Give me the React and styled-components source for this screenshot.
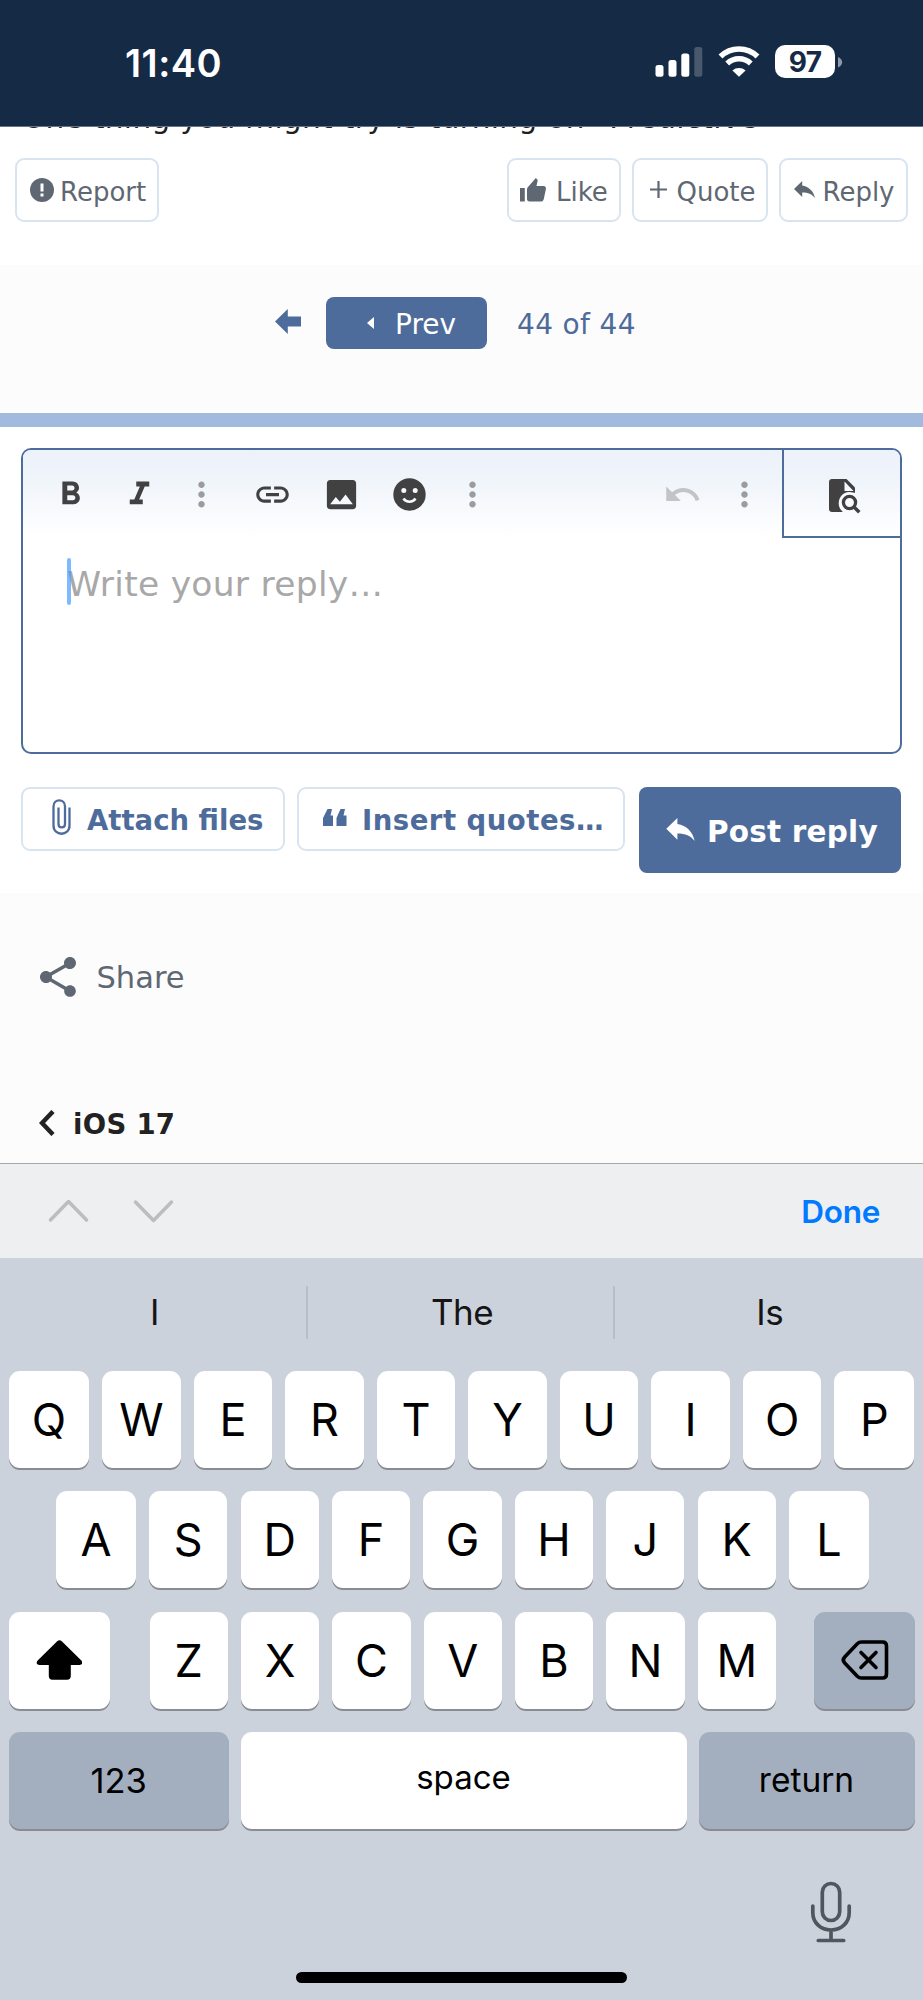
import React from "react";
import styled, { createGlobalStyle } from "styled-components";
import {
  MdFormatBold,
  MdFormatItalic,
  MdMoreVert,
  MdLink,
  MdImage,
  MdUndo,
  MdShare
} from "react-icons/md";

const NAVY = "#152a45";
const BLUE = "#4d6c9b";
const GREY = "#5f6872";

const TOP_ROW = "QWERTYUIOP".split("");
const HOME_ROW = "ASDFGHJKL".split("");
const BOTTOM_ROW = "ZXCVBNM".split("");
const SUGGESTIONS = ["I", "The", "Is"];

const GlobalStyle = createGlobalStyle`
  body {
    margin: 0;
    background: #fff;
  }

  * {
    box-sizing: border-box;
  }

  svg {
    display: block;
    flex: none;
  }
`;

const Screen = styled.div`
  display: flex;
  flex-direction: column;
  width: 923px;
  height: 2000px;
  overflow: hidden;
  font-family: Verdana, "DejaVu Sans", sans-serif;
`;

const StatusBar = styled.header`
  display: flex;
  flex: none;
  height: 127px;
  padding: 45px 80px 0 125px;
  background: ${NAVY};
  border-bottom: 1px solid #66738a;
  font-family: Inter, sans-serif;
`;

const Time = styled.div`
  flex: 1;
  color: #fff;
  font-size: 38px;
  font-weight: 600;
  line-height: 36px;
  letter-spacing: 0.5px;
`;

const StatusIcons = styled.div`
  display: flex;
  height: 34px;
`;

const Signal = styled.svg`
  margin-right: 15px;
`;

const Wifi = styled.svg`
  margin-right: 15px;
`;

const Battery = styled.div`
  width: 60px;
  height: 33px;
  border-radius: 10px;
  background: #fff;
  color: ${NAVY};
  font-size: 28px;
  font-weight: 700;
  line-height: 34px;
  letter-spacing: -0.8px;
  text-align: center;
`;

const Post = styled.section`
  flex: none;
  height: 138px;
  padding: 0 15px;
  background: #fff;
`;

const PostText = styled.div`
  display: flex;
  align-items: flex-end;
  height: 31px;
  padding-left: 7px;
  overflow: hidden;
  color: #1f1f1f;
  font-size: 29.5px;
  line-height: 54px;
  letter-spacing: 0.36px;
  white-space: nowrap;
`;

const PostLine = styled.span`
  height: 54px;
  margin-bottom: 13px;
`;

const ActionBar = styled.div`
  display: flex;
  gap: 11px;
`;

const ActionButton = styled.button`
  display: flex;
  align-items: center;
  width: ${props => props.$width}px;
  height: 64px;
  margin: 0 ${props => (props.$first ? "auto" : 0)} 0 0;
  padding: 4px 0 0 ${props => props.$pad || 12}px;
  border: 2px solid #d9e4f1;
  border-radius: 9px;
  background: #fff;
  color: ${GREY};
  font: 26px/30px Verdana, "DejaVu Sans", sans-serif;
  white-space: nowrap;

  svg {
    margin: -5px ${props => props.$gap || 6}px 0 0;
  }
`;

const Pager = styled.nav`
  display: flex;
  flex: none;
  align-items: flex-start;
  height: 148px;
  padding: 32px 0 0 275px;
  background: #fcfcfc;
  color: ${BLUE};
  font-size: 28px;
`;

const FirstArrow = styled.svg`
  margin: 12px 25px 0 0;
`;

const PrevButton = styled.button`
  display: flex;
  align-items: center;
  width: 161px;
  height: 52px;
  margin: 0 30px 0 0;
  padding: 4px 0 0 41px;
  border: 0;
  border-radius: 8px;
  background: ${BLUE};
  color: #fff;
  font: 28px/32px Verdana, "DejaVu Sans", sans-serif;

  svg {
    margin: -5px 21px 0 0;
  }
`;

const PageCount = styled.span`
  line-height: 55px;
  letter-spacing: 0.35px;
`;

const ReplyForm = styled.section`
  flex: none;
  height: 480px;
  padding: 21px 21px 0;
  border-top: 14px solid #a1bade;
  background: #fff;
`;

const Editor = styled.div`
  height: 306px;
  border: 2px solid ${BLUE};
  border-radius: 10px;
`;

const Toolbar = styled.div`
  display: flex;
  height: 88px;
  padding-left: 13.5px;
  border-radius: 8px 8px 0 0;
  background: linear-gradient(#ecf1fb, #f0f5fb 35%, #fff);
`;

const Tool = styled.div`
  display: flex;
  align-items: center;
  justify-content: center;
  width: ${props => (props.$narrow ? 56 : 68.5)}px;
  margin-right: ${props => props.$after || 0}px;
  padding-top: ${props => (props.$low ? 1 : 0)}px;
  color: ${props => props.$color || "#414141"};
`;

const PreviewTool = styled.div`
  display: flex;
  justify-content: center;
  width: 118.5px;
  padding: 29px 0 0 7px;
  border-left: 2px solid ${BLUE};
  border-bottom: 2px solid ${BLUE};
`;

const Placeholder = styled.div`
  position: relative;
  padding: 21px 0 0 44px;
  color: #a8a8a8;
  font-size: 34.5px;
  line-height: 50px;
  letter-spacing: 0.27px;
`;

const Caret = styled.span`
  position: absolute;
  top: 20px;
  left: 43.5px;
  width: 4.5px;
  height: 47px;
  border-radius: 2px;
  background: rgba(64, 153, 255, 0.68);
`;

const FormButtons = styled.div`
  display: flex;
  align-items: flex-start;
  margin-top: 33px;
`;

const FormButton = styled.button`
  display: flex;
  align-items: center;
  width: ${props => props.$width}px;
  height: 64px;
  margin: 0 12px 0 0;
  padding: 2px 0 0 ${props => props.$pad}px;
  border: 2px solid #d9e4f1;
  border-radius: 9px;
  background: #fff;
  color: ${BLUE};
  font: bold 27.5px/32px Verdana, "DejaVu Sans", sans-serif;
  letter-spacing: ${props => props.$spacing || 0}px;
  white-space: nowrap;

  svg {
    margin: -6px ${props => props.$gap}px 0 0;
  }
`;

const PostReplyButton = styled(FormButton)`
  height: 86px;
  margin: 0 0 0 2px;
  padding-top: 4px;
  border: 0;
  border-radius: 8px;
  background: ${BLUE};
  color: #fff;
  font-size: 29.5px;
`;

const Footer = styled.section`
  flex: none;
  height: 270px;
  padding: 59px 0 0 34px;
  background: #fcfcfc;
`;

const ShareRow = styled.div`
  display: flex;
  align-items: center;
  height: 50px;
  color: ${GREY};
  font-size: 30.5px;

  svg {
    margin-right: 14.5px;
  }
`;

const BackRow = styled.div`
  display: flex;
  align-items: center;
  height: 40px;
  margin-top: 102px;
  padding-left: 5px;
  color: #222;
  font-size: 27.5px;
  font-weight: bold;
  letter-spacing: 0.3px;

  svg {
    margin: -3px 18px 0 0;
  }
`;

const AccessoryBar = styled.div`
  display: flex;
  flex: none;
  align-items: center;
  height: 95px;
  padding: 0 43px 0 48px;
  border-top: 1px solid #a7a9ab;
  background: #eeeff1;
  font-family: Inter, sans-serif;

  svg {
    margin-right: 44px;
  }
`;

const Done = styled.span`
  margin-left: auto;
  color: #007aff;
  font-size: 31.5px;
  font-weight: 600;
  letter-spacing: -0.3px;
`;

const Keyboard = styled.section`
  flex: 1;
  background: #ccd2dc;
  color: #000;
  font-family: Inter, sans-serif;
`;

const Suggestions = styled.div`
  display: flex;
  height: 53px;
  margin: 28px 0 32px;
`;

const Suggestion = styled.div`
  flex: 1;
  padding-left: 3px;
  border-right: 2px solid ${props => (props.$last ? "transparent" : "#b8bdc8")};
  color: #151515;
  font-size: 35px;
  line-height: 53px;
  letter-spacing: -0.6px;
  text-align: center;
`;

const KeyRow = styled.div`
  display: flex;
  justify-content: space-between;
  height: 97px;
  margin: 0 ${props => (props.$inset ? "54px" : "8.5px")} 23.3px
    ${props => (props.$inset ? "56px" : "9px")};
`;

const Letters = styled.div`
  display: flex;
  justify-content: space-between;
  width: 626.5px;
  margin-left: 2px;
`;

const Key = styled.div`
  display: flex;
  align-items: center;
  justify-content: center;
  width: ${props => props.$width || 78.3}px;
  height: 97px;
  padding-bottom: ${props => props.$lift || 0}px;
  border-radius: 11px;
  background: ${props => (props.$dark ? "#a3aebf" : "#fff")};
  box-shadow: 0 2px 0 #898c92;
  font-size: ${props => props.$size || 45}px;
`;

const KeyboardFooter = styled.div`
  display: flex;
  flex-direction: column;
  align-items: flex-end;
  padding: 29px 71px 0 0;
`;

const HomeIndicator = styled.div`
  align-self: flex-start;
  width: 331px;
  height: 11px;
  margin: 28.5px 0 0 296px;
  border-radius: 6px;
  background: #000;
`;

// Pointed reply arrow, used both on the post and on the submit button
const ReplyIcon = ({ width, height }) => (
  <svg width={width} height={height} viewBox="0 0 21 17" fill="currentColor">
    <path d="M0 8 8.2 0v4.4C15 5.6 19.5 10 21 17c-3-4-7-5.600-12.800-5.600V16z" />
  </svg>
);

const ReportIcon = () => (
  <svg width="24" height="24" viewBox="0 0 24 24">
    <circle cx="12" cy="12" r="12" fill="currentColor" />
    <path d="M10.500 5.500h3v8h-3zM10.500 15.500h3v3h-3z" fill="#fff" />
  </svg>
);

const LikeIcon = () => (
  <svg width="26" height="24" viewBox="0 0 26 24" fill="currentColor">
    <path d="M0 10h4.800v13.500H0zM7 11.500c0-1 .3-1.700 1-2.400L15.800 0l1.300 1.200c.4.400.6.900.5 1.500L16.500 8h7.200c1.600 0 2.500 1.300 2.200 2.900l-2.100 10c-.4 1.700-1.500 2.600-3.100 2.600H9.500C8 23.500 7 22.500 7 21z" />
  </svg>
);

const PlusIcon = () => (
  <svg width="17" height="17" viewBox="0 0 17 17" stroke="currentColor" strokeWidth="2.200">
    <path d="M8.500 0v17M0 8.500h17" />
  </svg>
);

const SmileIcon = () => (
  <svg width="33" height="33" viewBox="0 0 33 33">
    <circle cx="16.500" cy="16.500" r="16.200" fill="currentColor" />
    <circle cx="10.800" cy="12.500" r="2.500" fill="#f5f8fc" />
    <circle cx="22.200" cy="12.500" r="2.500" fill="#f5f8fc" />
    <path d="M10.500 20.500c2.800 4.300 9.200 4.300 12 0" fill="none" stroke="#f5f8fc" strokeWidth="2.600" />
  </svg>
);

const PreviewIcon = () => (
  <svg width="32" height="36" viewBox="0 0 32 36">
    <path d="M3 0h14.500L26 8.500V33H3c-1.800 0-3-1.200-3-3V3c0-1.800 1.200-3 3-3z" fill="#414141" />
    <path d="M15.500 2.500v9.500h9z" fill="#f5f8fc" />
    <path d="M27 14v19.500H14.500C5 26 11 12.500 20.500 13z" fill="#f8fafd" />
    <circle cx="20.500" cy="23.500" r="6.100" fill="none" stroke="#414141" strokeWidth="3.300" />
    <path d="m24.800 27.800 5.500 5.500" stroke="#414141" strokeWidth="3.500" />
  </svg>
);

const PaperclipIcon = () => (
  <svg width="19" height="36" viewBox="0 0 19 36" fill="none" stroke="currentColor" strokeWidth="2.300">
    <path d="M17.500 8.500v18c0 11-16 11-16 0V7.500c0-8.300 11.500-8.300 11.500 0v17.500c0 4.500-6.500 4.500-6.500 0V8.500" />
  </svg>
);

const QuotesIcon = () => (
  <svg width="24" height="17" viewBox="0 0 24 17" fill="currentColor">
    <path d="M4.500 0H9L7.500 6.500H10V17H0V9zM17.500 0H22l-1.500 6.500H23.500V17h-10V9z" />
  </svg>
);

function App() {
  const renderKeys = (letters, edge) =>
    letters.map((letter, index) => (
      <Key
        key={letter}
        $width={edge && (index === 0 || index === letters.length - 1) ? 80 : undefined}
      >
        {letter}
      </Key>
    ));

  return (
    <Screen>
      <GlobalStyle />
      <StatusBar>
        <Time>11:40</Time>
        <StatusIcons>
          <Signal width="48" height="34" viewBox="0 0 48 34" fill="#fff">
            <rect x="0.500" y="20" width="8" height="11.700" rx="2.500" />
            <rect x="13.500" y="15" width="8" height="16.700" rx="2.500" />
            <rect x="26.300" y="8.600" width="8" height="23.100" rx="2.500" />
            <rect x="39.300" y="2" width="8" height="29.700" rx="2.500" opacity="0.220" />
          </Signal>
          <Wifi width="42" height="34" viewBox="0 0 42 34" fill="none" stroke="#fff">
            <path d="M2.500 11.500a26.500 26.500 0 0 1 37 0" strokeWidth="5.600" />
            <path d="M9.200 18.500a17 17 0 0 1 23.600 0" strokeWidth="5.400" />
            <path d="M14.400 25.500a10 10 0 0 1 13.200 0L21 31.800z" fill="#fff" stroke="none" />
          </Wifi>
          <Battery>97</Battery>
          <svg width="8" height="34" viewBox="0 0 8 34">
            <path d="M3 12c5.500 1.800 5.500 8.700 0 10.500z" fill="#8f99a8" />
          </svg>
        </StatusIcons>
      </StatusBar>

      <Post>
        <PostText>
          <PostLine>One thing you might try is turning on “Predictive</PostLine>
        </PostText>
        <ActionBar>
          <ActionButton $width={144} $first $pad={13}>
            <ReportIcon />
            Report
          </ActionButton>
          <ActionButton $width={114} $gap={10} $pad={11}>
            <LikeIcon />
            Like
          </ActionButton>
          <ActionButton $width={136} $gap={9.5} $pad={16}>
            <PlusIcon />
            Quote
          </ActionButton>
          <ActionButton $width={129} $gap={7.5} $pad={13}>
            <ReplyIcon width={21} height={17} />
            Reply
          </ActionButton>
        </ActionBar>
      </Post>

      <Pager>
        <FirstArrow width="26" height="25" viewBox="0 0 26 25" fill="currentColor">
          <path d="M0 12.500 12.800 0v7.500H26v10H12.800V25z" />
        </FirstArrow>
        <PrevButton>
          <svg width="7" height="12" viewBox="0 0 7 12" fill="currentColor">
            <path d="M0 6 7 0v12z" />
          </svg>
          Prev
        </PrevButton>
        <PageCount>44 of 44</PageCount>
      </Pager>

      <ReplyForm>
        <Editor>
          <Toolbar>
            <Tool $low>
              <MdFormatBold size={39} />
            </Tool>
            <Tool $low>
              <MdFormatItalic size={39} />
            </Tool>
            <Tool $narrow $color="#9c9c9e" $after={9}>
              <MdMoreVert size={39} />
            </Tool>
            <Tool $low>
              <MdLink size={39} />
            </Tool>
            <Tool $low>
              <MdImage size={39} />
            </Tool>
            <Tool $low>
              <SmileIcon />
            </Tool>
            <Tool $narrow $color="#9c9c9e" $after={148}>
              <MdMoreVert size={39} />
            </Tool>
            <Tool $low $color="#c2c4c7">
              <MdUndo size={39} />
            </Tool>
            <Tool $narrow $color="#9c9c9e" $after={9}>
              <MdMoreVert size={39} />
            </Tool>
            <PreviewTool>
              <PreviewIcon />
            </PreviewTool>
          </Toolbar>
          <Placeholder>
            <Caret />
            Write your reply…
          </Placeholder>
        </Editor>
        <FormButtons>
          <FormButton $width={264} $pad={29} $gap={16}>
            <PaperclipIcon />
            Attach files
          </FormButton>
          <FormButton $width={328} $pad={24} $gap={15} $spacing={0.5}>
            <QuotesIcon />
            Insert quotes…
          </FormButton>
          <PostReplyButton $width={262} $pad={27} $gap={12} $spacing={0.2}>
            <ReplyIcon width={29} height={23} />
            Post reply
          </PostReplyButton>
        </FormButtons>
      </ReplyForm>

      <Footer>
        <ShareRow>
          <MdShare size={48} />
          Share
        </ShareRow>
        <BackRow>
          <svg width="16" height="26" viewBox="0 0 16 26" fill="none" stroke="currentColor" strokeWidth="4.500">
            <path d="M14 1.500 3 13l11 11.500" />
          </svg>
          iOS 17
        </BackRow>
      </Footer>

      <AccessoryBar>
        <svg width="41" height="24" viewBox="0 0 41 24" fill="none" stroke="#bcbdbd" strokeWidth="3.500" strokeLinecap="round" strokeLinejoin="round">
          <path d="M2.500 21 20.500 2.500 38.500 21" />
        </svg>
        <svg width="41" height="24" viewBox="0 0 41 24" fill="none" stroke="#bcbdbd" strokeWidth="3.500" strokeLinecap="round" strokeLinejoin="round">
          <path d="M2.500 3 20.500 21.500 38.500 3" />
        </svg>
        <Done>Done</Done>
      </AccessoryBar>

      <Keyboard>
        <Suggestions>
          {SUGGESTIONS.map((word, index) => (
            <Suggestion key={word} $last={index === SUGGESTIONS.length - 1}>
              {word}
            </Suggestion>
          ))}
        </Suggestions>
        <KeyRow>{renderKeys(TOP_ROW, true)}</KeyRow>
        <KeyRow $inset>{renderKeys(HOME_ROW, true)}</KeyRow>
        <KeyRow>
          <Key $width={100.5}>
            <svg width="46" height="40" viewBox="-0.500 0 46 40" fill="#000">
              <path d="M20.700 1.200c1.400-1.400 3.200-1.400 4.600 0l19.300 19c2.200 2.200 1.300 4.800-1.600 4.800h-8.700v11c0 2.400-1.300 3.700-3.700 3.700H16c-2.400 0-3.700-1.300-3.700-3.700V25H3c-2.900 0-3.800-2.600-1.600-4.800z" />
            </svg>
          </Key>
          <Letters>{renderKeys(BOTTOM_ROW)}</Letters>
          <Key $width={100.5} $dark>
            <svg width="50" height="40" viewBox="-2.500 0 50 40" fill="none" stroke="#000" strokeWidth="3.600" strokeLinecap="round" strokeLinejoin="round">
              <path d="M20 2h21c2.700 0 4 1.300 4 4v28c0 2.700-1.300 4-4 4H20c-1.800 0-3-.5-4.200-1.700L3.200 23c-1.800-1.900-1.800-4.100 0-6L15.800 3.700C17 2.500 18.200 2 20 2zM19.500 12.500l15 15M34.500 12.500l-15 15" />
            </svg>
          </Key>
        </KeyRow>
        <KeyRow>
          <Key $width={219.5} $size={34.5} $dark>
            123
          </Key>
          <Key $width={446} $size={33} $lift={7}>
            space
          </Key>
          <Key $width={216} $size={33.5} $dark>
            return
          </Key>
        </KeyRow>
        <KeyboardFooter>
          <svg width="42" height="62" viewBox="0 0 42 62" fill="none" stroke="#50565d" strokeWidth="3.700" strokeLinecap="round">
            <rect x="12.300" y="2.500" width="17.400" height="37" rx="8.700" />
            <path d="M2.800 25v6.500c0 10.500 8 17.500 18.200 17.500s18.200-7 18.200-17.500V25M21 49v10.500M8.300 59.500h25.400" />
          </svg>
          <HomeIndicator />
        </KeyboardFooter>
      </Keyboard>
    </Screen>
  );
}

export default App;
